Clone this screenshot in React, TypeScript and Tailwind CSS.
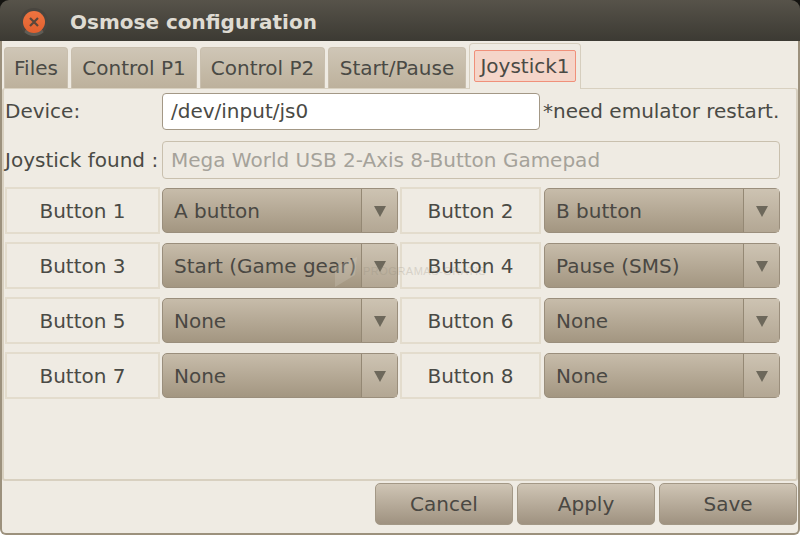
const font = "font-['DejaVu_Sans',sans-serif]";

function Tab({ label, width }: { label: string; width: string }) {
  return (
    <div className={`${width} h-[41px] mr-[3px] flex items-center justify-center rounded-t-[4px] border border-b-0 border-[#c9bfae] bg-gradient-to-b from-[#cfc6b6] to-[#bdb19c] text-[20px] text-[#4a4a45]`}>
      {label}
    </div>
  );
}

function ComboBox({ value }: { value: string }) {
  return (
    <div className="w-[236px] h-[45px] flex rounded-[5px] border border-[#9a8e7c] bg-gradient-to-b from-[#c7bcaa] to-[#a39681] text-[20px] text-[#4a4843]">
      <div className="flex-1 flex items-center pl-[11px] whitespace-nowrap overflow-hidden">{value}</div>
      <div className="w-[36px] flex items-center justify-center border-l border-[#948874] bg-gradient-to-b from-[#cdc3b2] to-[#b3a794]">
        <svg width="12" height="12" viewBox="0 0 12 12">
          <path d="M0 1h12L6 12z" fill="#6d685b" />
        </svg>
      </div>
    </div>
  );
}

function ButtonRow({ left, leftValue, right, rightValue }: { left: string; leftValue: string; right: string; rightValue: string }) {
  return (
    <div className="flex h-[47px] items-center">
      <div className="w-[155px] h-[47px] mr-[2px] flex items-center justify-center border-2 border-[#e3dccd] text-[20px] text-[#4a4a45]">{left}</div>
      <ComboBox value={leftValue} />
      <div className="w-[141px] h-[47px] ml-[2px] mr-[3px] flex items-center justify-center border-2 border-[#e3dccd] text-[20px] text-[#4a4a45]">{right}</div>
      <ComboBox value={rightValue} />
    </div>
  );
}

function ActionButton({ label }: { label: string }) {
  return (
    <div className="w-[138px] h-[42px] flex items-center justify-center rounded-[5px] border border-[#a39886] bg-gradient-to-b from-[#cfc5b5] to-[#9f9280] text-[20px] text-[#4a4843]">
      {label}
    </div>
  );
}

export default function App() {
  return (
    <div className={`${font} relative w-[800px] h-[535px] overflow-hidden flex flex-col bg-[linear-gradient(#141310_0,#141310_20px,#ffffff_20px)]`}>
      {/* Title bar */}
      <div className="h-[41px] shrink-0 flex items-center rounded-t-[9px] bg-gradient-to-b from-[#57534a] to-[#3c3a33] pt-[3px]">
        <div className="ml-[20px] w-[28px] h-[28px] flex items-center justify-center rounded-full bg-gradient-to-b from-[#ee7440] to-[#e2602f] border-[3px] border-[#48453f] border-b-[#5f5c55]">
          <svg width="12" height="12" viewBox="0 0 12 12">
            <path d="M2 2l8 8M10 2l-8 8" stroke="#5a463a" strokeWidth="2.2" />
          </svg>
        </div>
        <span className="ml-[22px] text-[20px] font-bold text-[#dfdbd2]">Osmose configuration</span>
      </div>

      {/* Window body */}
      <div className="flex-1 flex flex-col bg-[#efebe3] border-x-2 border-b-2 border-[#9c917d] rounded-b-[6px]">
        {/* Tabs */}
        <div className="h-[47px] shrink-0 flex items-end pl-[2px]">
          <Tab label="Files" width="w-[64px]" />
          <Tab label="Control P1" width="w-[126px]" />
          <Tab label="Control P2" width="w-[125px]" />
          <Tab label="Start/Pause" width="w-[138px]" />
          <div className="w-[112px] h-[46px] -mb-px z-10 flex items-center justify-center rounded-t-[4px] border border-b-0 border-[#d6cebe] bg-[#efebe3] pb-[2px]">
            <div className="w-[102px] h-[32px] flex items-center justify-center rounded-[2px] border border-[#f0907a] bg-[#f5d5c9] text-[20px] text-[#4a4a45]">
              Joystick1
            </div>
          </div>
        </div>

        {/* Page */}
        <div className="h-[393px] shrink-0 border-2 border-t border-[#d8d0c0] rounded-[3px] pt-[4px] pl-[1px]">
          <div className="h-[37px] flex items-center text-[20px] text-[#4a4a45]">
            <span className="w-[157px] mb-[2px]">Device:</span>
            <div className="w-[378px] h-[37px] flex items-center pl-[8px] pb-[2px] rounded-[4px] border border-[#a39886] bg-white">/dev/input/js0</div>
            <span className="ml-[3px] mb-[2px] whitespace-nowrap">*need emulator restart.</span>
          </div>
          <div className="h-[38px] mt-[11px] flex items-center text-[20px] text-[#4a4a45]">
            <span className="w-[157px] whitespace-nowrap">Joystick found :</span>
            <div className="w-[618px] h-[38px] flex items-center pl-[8px] rounded-[4px] border border-[#c9c0ae] text-[#a5a29a]">Mega World USB 2-Axis 8-Button Gamepad</div>
          </div>
          <div className="mt-[8px] flex flex-col gap-[8px]">
            <ButtonRow left="Button 1" leftValue="A button" right="Button 2" rightValue="B button" />
            <ButtonRow left="Button 3" leftValue="Start (Game gear)" right="Button 4" rightValue="Pause (SMS)" />
            <ButtonRow left="Button 5" leftValue="None" right="Button 6" rightValue="None" />
            <ButtonRow left="Button 7" leftValue="None" right="Button 8" rightValue="None" />
          </div>
        </div>

        {/* Actions */}
        <div className="mt-[2px] pr-px flex justify-end gap-[4px]">
          <ActionButton label="Cancel" />
          <ActionButton label="Apply" />
          <ActionButton label="Save" />
        </div>
      </div>

      {/* Faint watermark over the form */}
      <div className="absolute left-[335px] top-[255px] flex items-center gap-[6px] opacity-25 pointer-events-none">
        <svg width="22" height="32" viewBox="0 0 22 32">
          <path d="M0 32L20 20L22 2L0 12z" fill="#d8d2c6" />
        </svg>
        <span className="font-['Liberation_Sans',sans-serif] text-[11px] tracking-[0.5px] text-[#8d8778] whitespace-nowrap">PROGRAMAS-GRATIS</span>
      </div>
    </div>
  );
}
